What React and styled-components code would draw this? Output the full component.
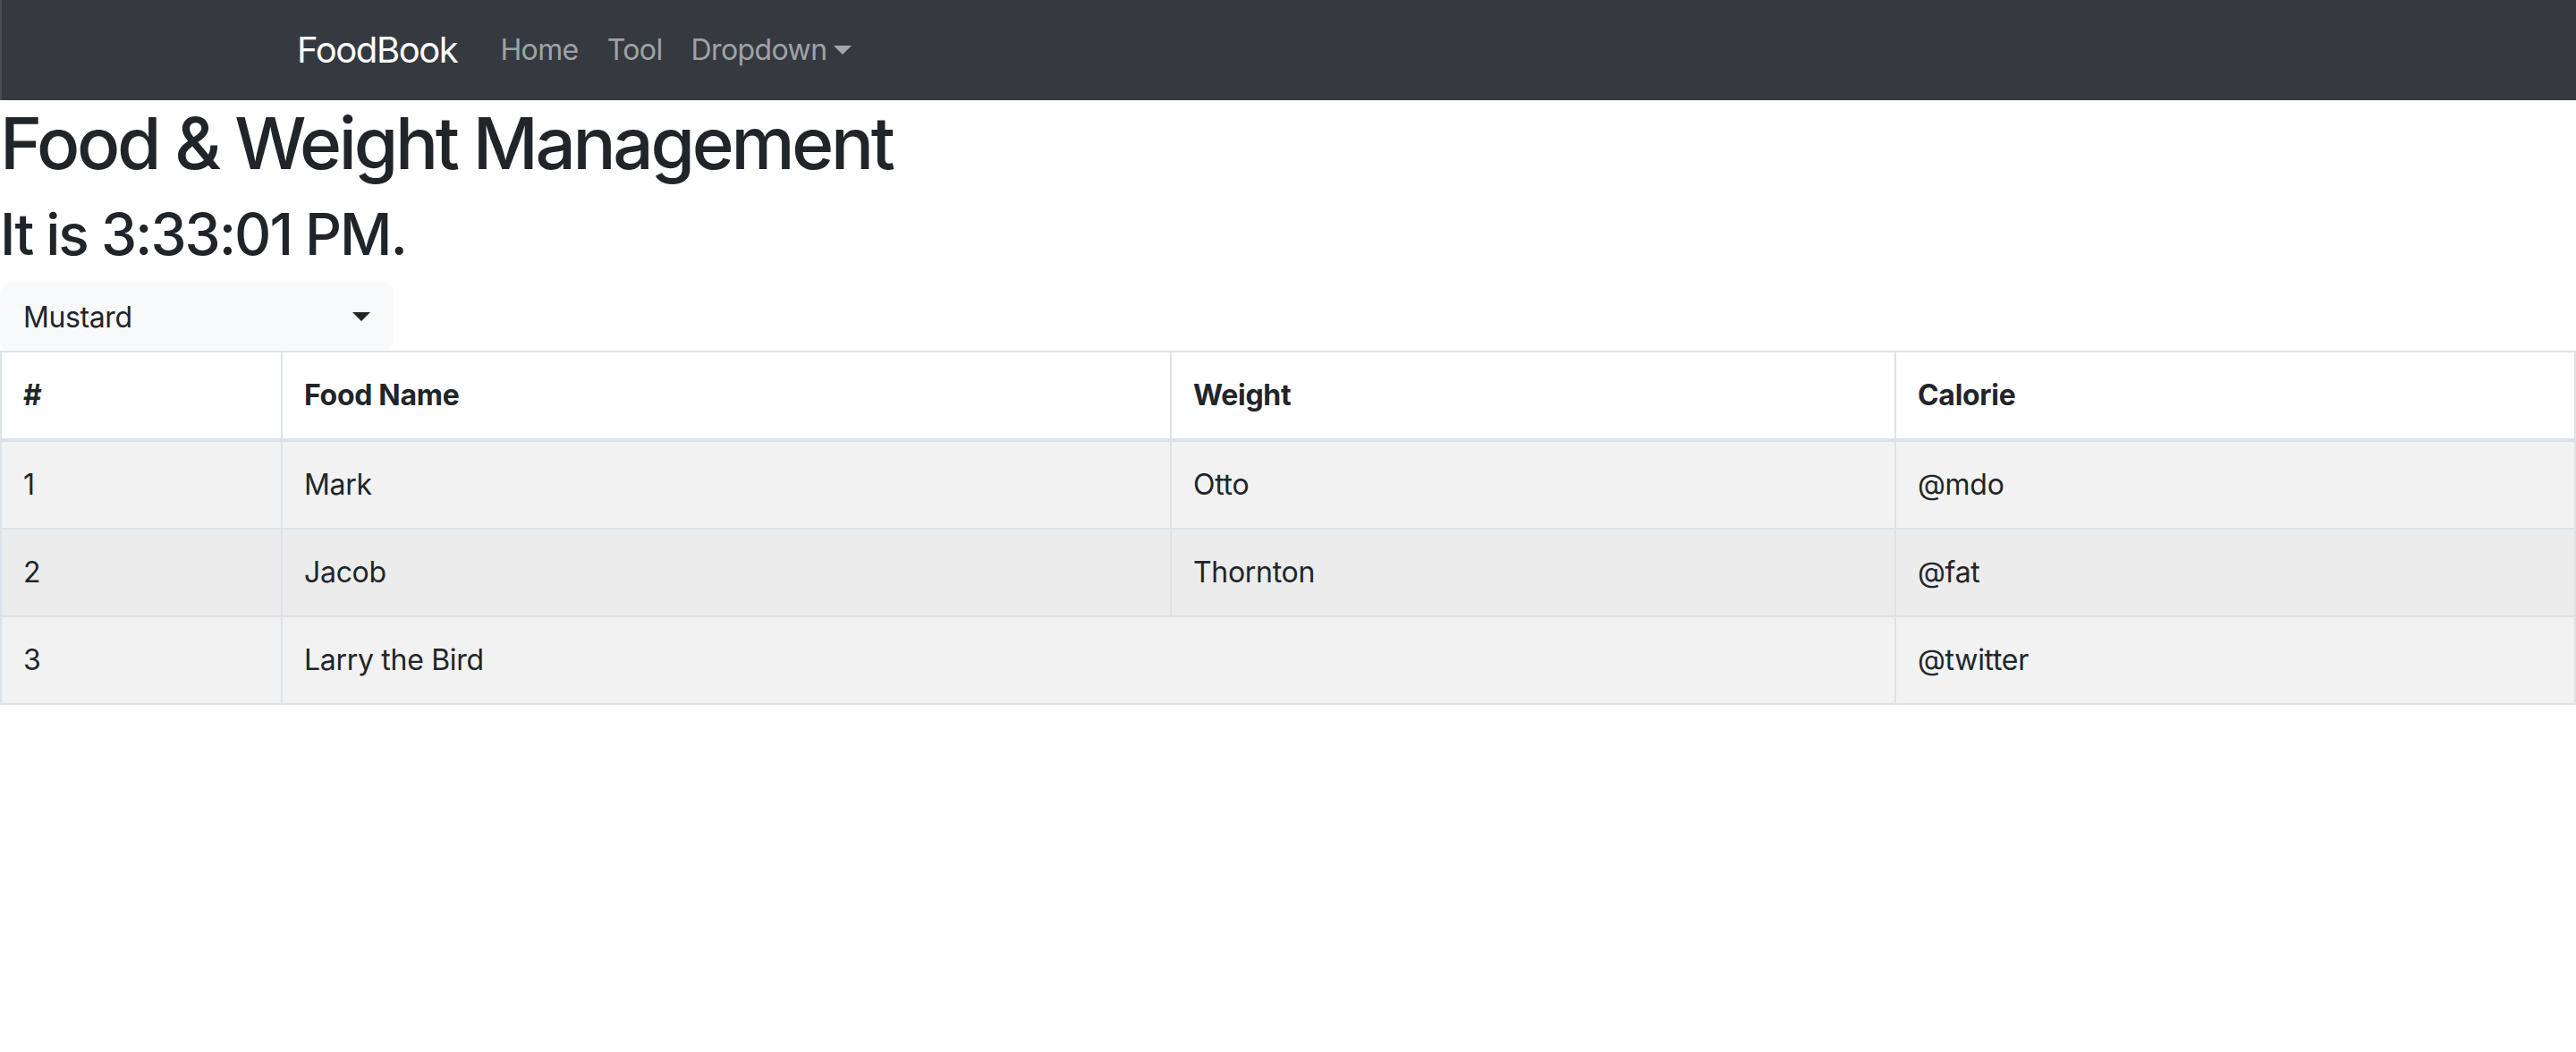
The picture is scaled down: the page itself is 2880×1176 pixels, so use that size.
import React from 'react'
import styled, { createGlobalStyle } from 'styled-components'

const Global = createGlobalStyle`
  body {
    margin: 0;
    font-family: Inter, "Noto Sans", sans-serif;
    color: #212529;
    background: #fff;
  }
`

const Navbar = styled.nav`
  display: flex;
  align-items: center;
  height: 112px;
  padding: 0 0 0 330px;
  box-sizing: border-box;
  background: #343a40;
  border-left: 2px solid #4a4f55;
`

const Brand = styled.a`
  font-size: 40px;
  line-height: 60px;
  letter-spacing: -1.4px;
  color: #fff;
  margin-right: 32px;
  text-decoration: none;
`

const NavLink = styled.a`
  display: flex;
  align-items: center;
  font-size: 32px;
  line-height: 48px;
  letter-spacing: -0.6px;
  padding: 0 16px;
  color: rgba(255, 255, 255, 0.55);
  text-decoration: none;
`

const Caret = styled.span`
  display: inline-block;
  margin-left: 8px;
  border-top: 10px solid ${p => p.$color || 'currentColor'};
  border-left: 10px solid transparent;
  border-right: 10px solid transparent;
  height: 0;
  width: 0;
`

const Title = styled.h1`
  font-size: 80px;
  font-weight: 500;
  line-height: 96px;
  margin: 0 0 16px;
  letter-spacing: -3.3px;
`

const Clock = styled.h2`
  font-size: 64px;
  font-weight: 500;
  line-height: 76px;
  margin: 0 0 16px;
  letter-spacing: -2px;
`

const Select = styled.button`
  display: flex;
  align-items: center;
  justify-content: space-between;
  width: 440px;
  height: 76px;
  padding: 0 26px;
  box-sizing: border-box;
  background: #f8f9fa;
  border: none;
  border-radius: 12px;
  font-family: inherit;
  font-size: 32px;
  letter-spacing: -0.4px;
  color: #212529;
`

const Table = styled.table`
  width: 100%;
  table-layout: fixed;
  border-collapse: collapse;
  border: 2px solid #dee2e6;
  font-size: 32px;
  line-height: 48px;
  letter-spacing: -0.3px;
`

const Head = styled.thead`
  border-bottom: 4px solid #dee2e6;
`

const Row = styled.tr`
  background: ${p => p.$bg || '#fff'};
  border-bottom: 2px solid #dee2e6;
`

const Th = styled.th`
  text-align: left;
  font-weight: 700;
  padding: 24px;
  border: 2px solid #dee2e6;
`

const Td = styled.td`
  padding: 24px;
  border: 2px solid #dee2e6;
`

const rows = [
  { id: 1, name: 'Mark', weight: 'Otto', cal: '@mdo', bg: '#f2f2f2' },
  { id: 2, name: 'Jacob', weight: 'Thornton', cal: '@fat', bg: '#ececec' },
  { id: 3, name: 'Larry the Bird', cal: '@twitter', bg: '#f2f2f2', span: true },
]

export default function App() {
  return (
    <>
      <Global />
      <Navbar>
        <Brand>FoodBook</Brand>
        <NavLink>Home</NavLink>
        <NavLink>Tool</NavLink>
        <NavLink>
          Dropdown
          <Caret />
        </NavLink>
      </Navbar>
      <Title>Food &amp; Weight Management</Title>
      <Clock>It is 3:33:01 PM.</Clock>
      <Select>
        Mustard
        <Caret $color="#212529" />
      </Select>
      <Table>
        <colgroup>
          <col style={{ width: 314 }} />
          <col style={{ width: 994 }} />
          <col style={{ width: 810 }} />
          <col />
        </colgroup>
        <Head>
          <Row>
            <Th>#</Th>
            <Th>Food Name</Th>
            <Th>Weight</Th>
            <Th>Calorie</Th>
          </Row>
        </Head>
        <tbody>
          {rows.map(r => (
            <Row key={r.id} $bg={r.bg}>
              <Td>{r.id}</Td>
              {r.span ? (
                <Td colSpan={2}>{r.name}</Td>
              ) : (
                <>
                  <Td>{r.name}</Td>
                  <Td>{r.weight}</Td>
                </>
              )}
              <Td>{r.cal}</Td>
            </Row>
          ))}
        </tbody>
      </Table>
    </>
  )
}
